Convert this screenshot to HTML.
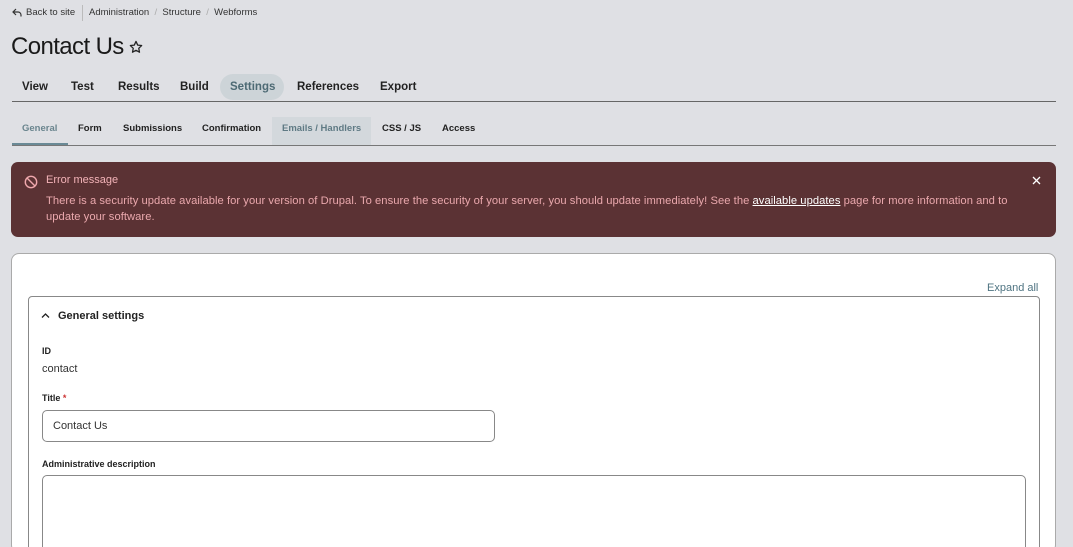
<!DOCTYPE html>
<html style="width:1073px;height:547px;overflow:hidden"><head><meta charset="utf-8"><style>
*{margin:0;padding:0;box-sizing:border-box}
body{width:1073px;height:547px;overflow:hidden;background:#dfe0e4;font-family:"Liberation Sans",sans-serif;color:#222;position:relative}
.a{position:absolute;white-space:nowrap}
.bc{font-size:9.5px;color:#333;top:7px}
.tab{font-size:11.5px;font-weight:bold;top:81px;color:#222}
.st{font-size:9.5px;font-weight:bold;top:123px;color:#222}
.lab{font-size:9px;font-weight:bold;color:#222}
</style></head><body>
<svg class="a" style="left:12px;top:8px" width="10" height="9" viewBox="0 0 10 9"><path d="M4 1L1 4l3 3M1 4h5a3 3 0 0 1 3 3v1.5" fill="none" stroke="#333" stroke-width="1.2"/></svg>
<div class="a bc" style="left:26px">Back to site</div>
<div class="a" style="left:82px;top:5px;width:1px;height:16px;background:#bbb"></div>
<div class="a bc" style="left:89px">Administration <span style="color:#aaa">&nbsp;/&nbsp;</span> Structure <span style="color:#aaa">&nbsp;/&nbsp;</span> Webforms</div>
<div class="a" style="left:11px;top:33px;font-size:24px;letter-spacing:-0.6px;color:#1a1a1a">Contact Us</div>
<svg class="a" style="left:129px;top:40px" width="14" height="14" viewBox="0 0 24 24"><path d="M12 2.5l2.9 6.2 6.8.8-5 4.7 1.3 6.7L12 17.6l-6 3.3 1.3-6.7-5-4.7 6.8-.8z" fill="none" stroke="#222" stroke-width="2.2" stroke-linejoin="round"/></svg>
<div class="a" style="left:220px;top:74px;width:64px;height:26px;border-radius:13px;background:#cdd4d8"></div>
<div class="a tab" style="left:22px">View</div>
<div class="a tab" style="left:71px">Test</div>
<div class="a tab" style="left:118px">Results</div>
<div class="a tab" style="left:180px">Build</div>
<div class="a tab" style="left:230px;color:#4d6a74">Settings</div>
<div class="a tab" style="left:297px">References</div>
<div class="a tab" style="left:380px">Export</div>
<div class="a" style="left:12px;top:101px;width:1044px;height:1px;background:#666"></div>
<div class="a" style="left:272px;top:117px;width:99px;height:28px;background:#d3d8dc"></div>
<div class="a st" style="left:22px;color:#6a858e">General</div>
<div class="a" style="left:12px;top:143px;width:56px;height:2px;background:#6a8a96"></div>
<div class="a st" style="left:78px">Form</div>
<div class="a st" style="left:123px">Submissions</div>
<div class="a st" style="left:202px">Confirmation</div>
<div class="a st" style="left:282px;color:#5f7a84">Emails / Handlers</div>
<div class="a st" style="left:382px">CSS / JS</div>
<div class="a st" style="left:442px">Access</div>
<div class="a" style="left:12px;top:144.5px;width:1044px;height:1px;background:#777"></div>
<div class="a" style="left:11px;top:162px;width:1045px;height:75px;border-radius:7px;background:#5b3234"></div>
<svg class="a" style="left:24px;top:175px" width="14" height="14" viewBox="0 0 14 14"><circle cx="7" cy="7" r="5.7" fill="none" stroke="#f0a8ad" stroke-width="1.4"/><path d="M3 3l8 8" stroke="#f0a8ad" stroke-width="1.4"/></svg>
<div class="a" style="left:46px;top:174px;font-size:11px;color:#f3b3b8">Error message</div>
<div class="a" style="left:46px;top:193px;font-size:11.2px;letter-spacing:0.05px;color:#eaa8ad;line-height:16px">There is a security update available for your version of Drupal. To ensure the security of your server, you should update immediately! See the <span style="color:#fff;text-decoration:underline">available updates</span> page for more information and to<br>update your software.</div>
<svg class="a" style="left:1032px;top:176px" width="9" height="9" viewBox="0 0 9 9"><path d="M1 1l7 7M8 1l-7 7" stroke="#fff" stroke-width="1.3"/></svg>
<div class="a" style="left:11px;top:253px;width:1045px;height:300px;border-radius:8px;background:#fff;border:1px solid #aaa"></div>
<div class="a" style="left:987px;top:282px;font-size:11px;color:#4f7482">Expand all</div>
<div class="a" style="left:28px;top:296px;width:1012px;height:260px;border-radius:4px;border:1px solid #888"></div>
<svg class="a" style="left:41px;top:312px" width="9" height="7" viewBox="0 0 9 7"><path d="M1 5.5L4.5 2 8 5.5" fill="none" stroke="#222" stroke-width="1.3"/></svg>
<div class="a" style="left:58px;top:310px;font-size:11px;font-weight:bold;color:#222">General settings</div>
<div class="a lab" style="left:42px;top:346px">ID</div>
<div class="a" style="left:42px;top:363px;font-size:11px;color:#333">contact</div>
<div class="a lab" style="left:42px;top:393px">Title<span style="color:#c33"> *</span></div>
<div class="a" style="left:42px;top:410px;width:453px;height:32px;border:1px solid #888;border-radius:5px"></div>
<div class="a" style="left:53px;top:420px;font-size:11px;color:#333">Contact Us</div>
<div class="a lab" style="left:42px;top:459px">Administrative description</div>
<div class="a" style="left:42px;top:475px;width:984px;height:80px;border:1px solid #888;border-radius:5px"></div>
</body></html>
